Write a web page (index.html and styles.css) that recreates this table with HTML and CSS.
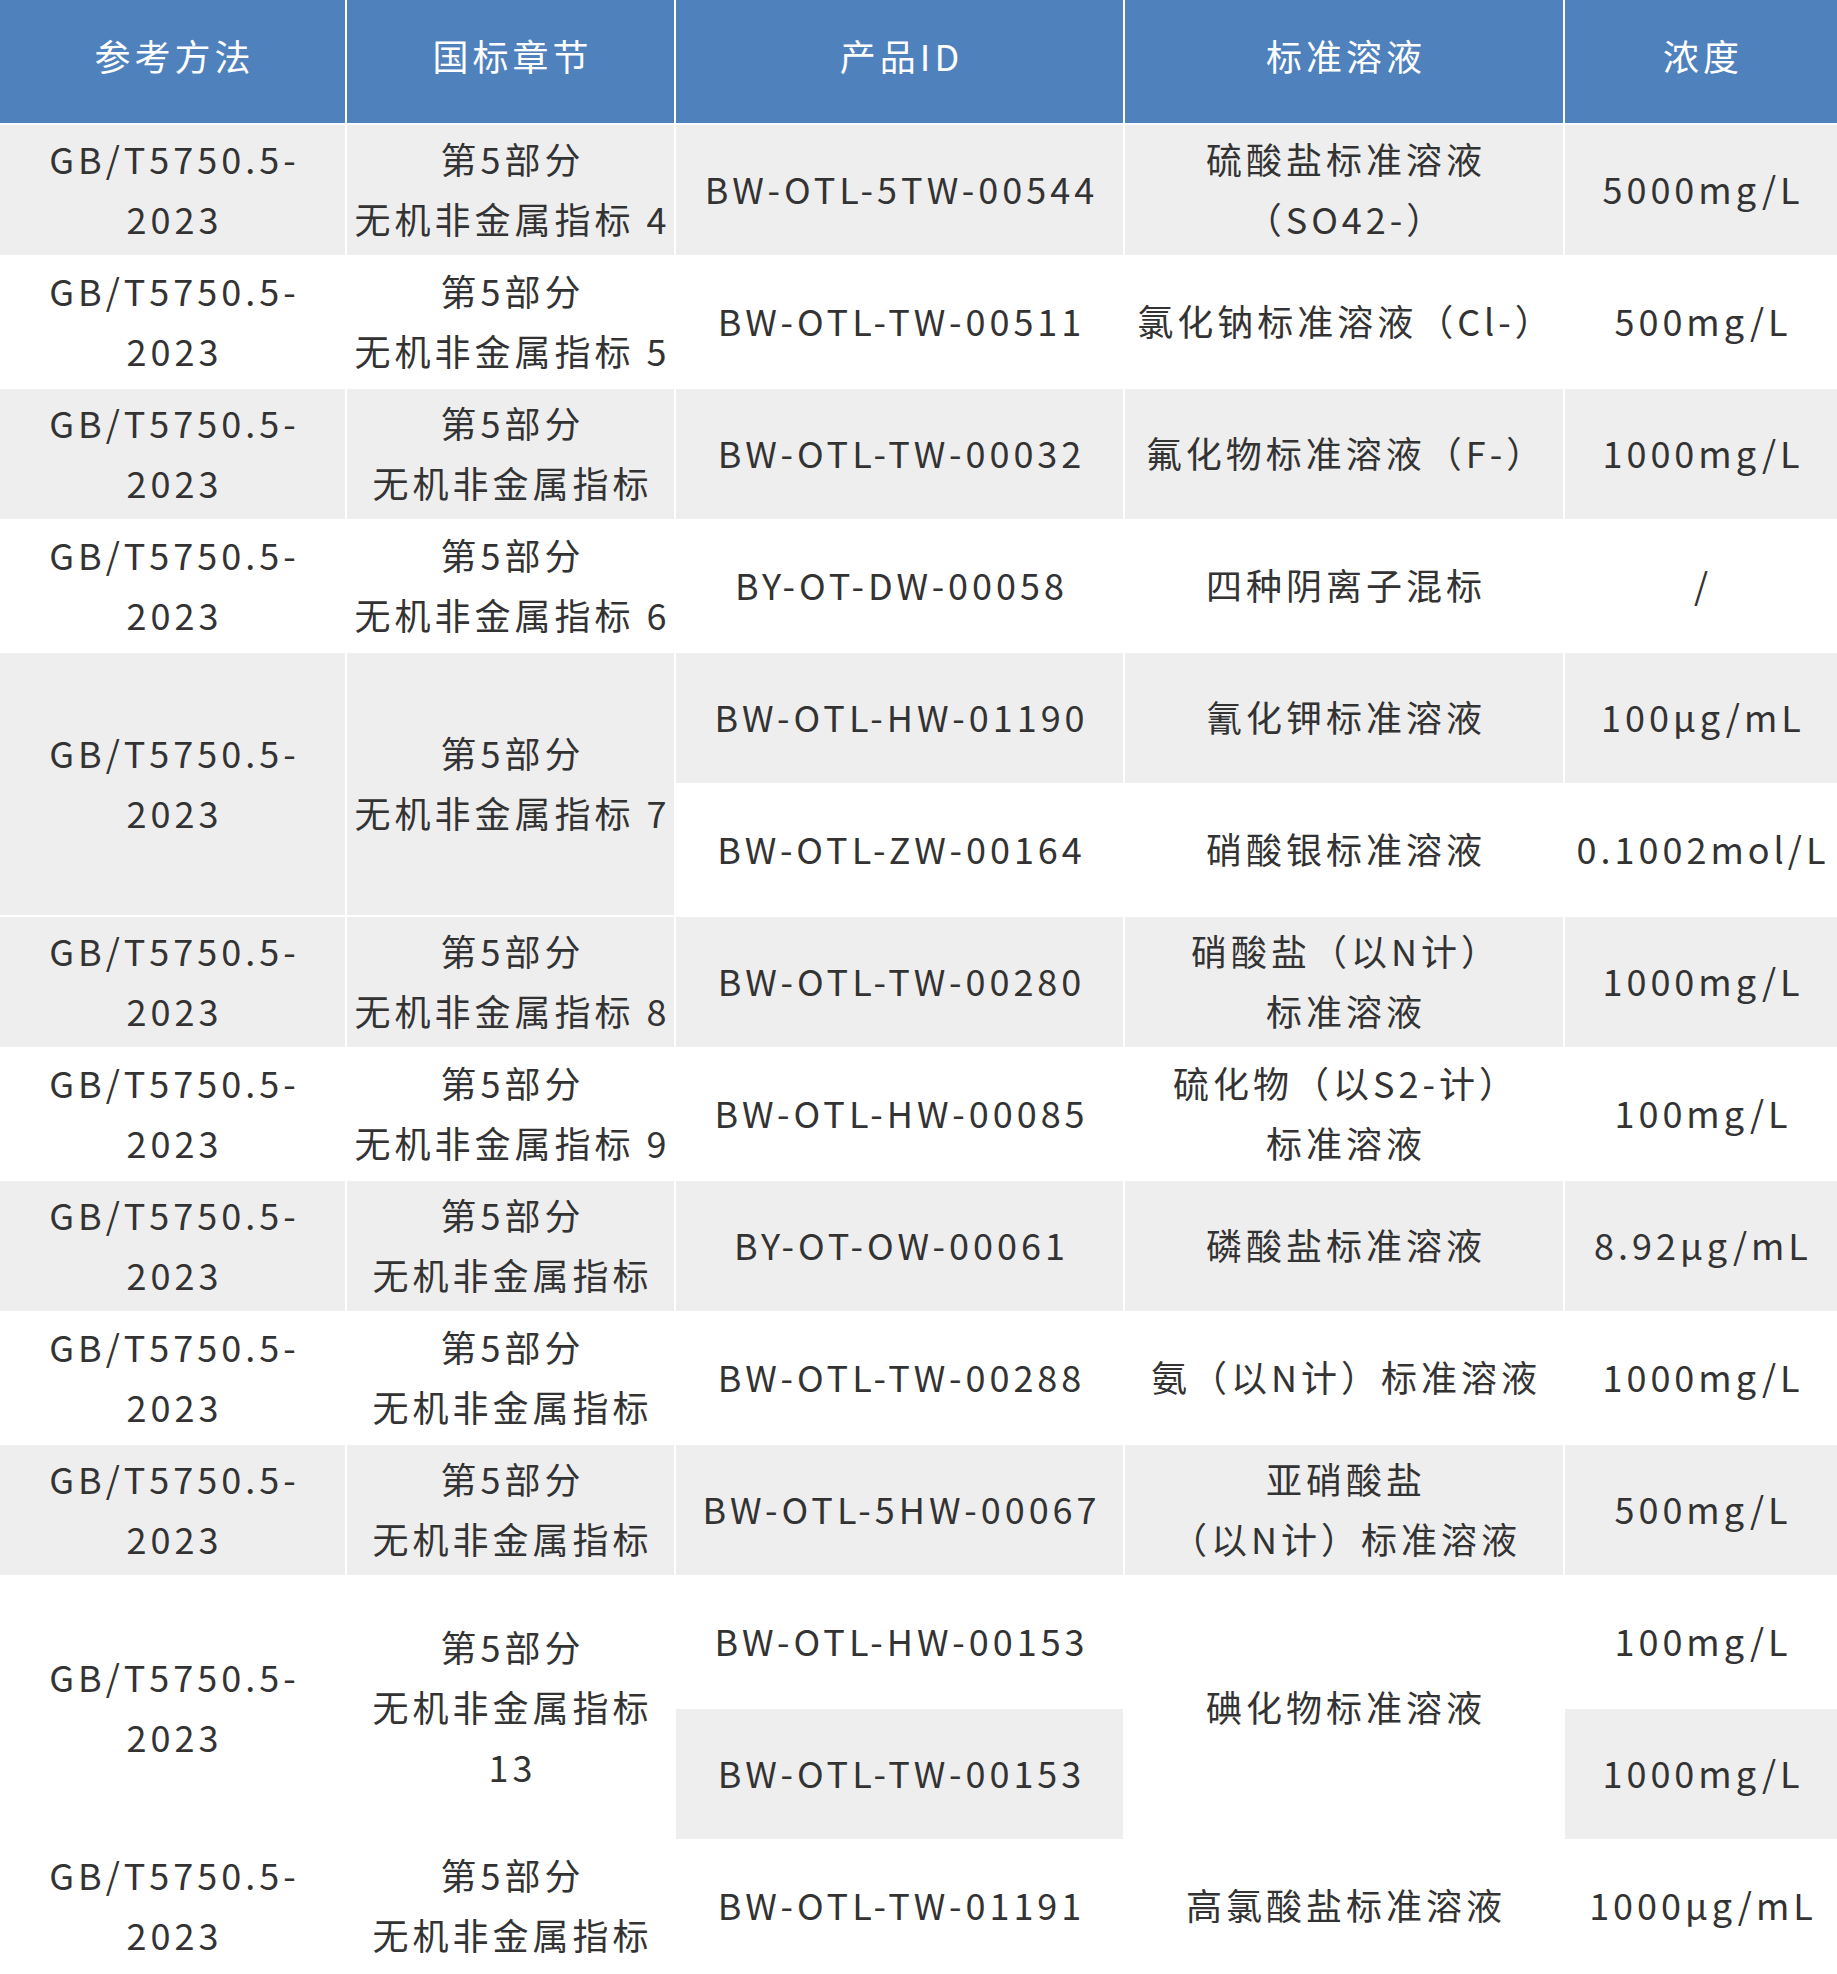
FILE: index.html
```html
<!DOCTYPE html>
<html lang="zh-CN">
<head>
<meta charset="utf-8">
<title>标准溶液对照表</title>
<link rel="stylesheet" href="styles.css">
</head>
<body>
<table class="std-table">
  <colgroup>
    <col class="col-method">
    <col class="col-chapter">
    <col class="col-id">
    <col class="col-solution">
    <col class="col-conc">
  </colgroup>
  <thead>
    <tr>
      <th>参考方法</th>
      <th>国标章节</th>
      <th>产品ID</th>
      <th>标准溶液</th>
      <th>浓度</th>
    </tr>
  </thead>
  <tbody>
    <tr>
      <td>GB/T5750.5-<br>2023</td>
      <td>第5部分<br>无机非金属指标 4</td>
      <td>BW-OTL-5TW-00544</td>
      <td>硫酸盐标准溶液<br>（SO42-）</td>
      <td>5000mg/L</td>
    </tr>
    <tr>
      <td>GB/T5750.5-<br>2023</td>
      <td>第5部分<br>无机非金属指标 5</td>
      <td>BW-OTL-TW-00511</td>
      <td>氯化钠标准溶液（Cl-）</td>
      <td>500mg/L</td>
    </tr>
    <tr>
      <td>GB/T5750.5-<br>2023</td>
      <td>第5部分<br>无机非金属指标</td>
      <td>BW-OTL-TW-00032</td>
      <td>氟化物标准溶液（F-）</td>
      <td>1000mg/L</td>
    </tr>
    <tr>
      <td>GB/T5750.5-<br>2023</td>
      <td>第5部分<br>无机非金属指标 6</td>
      <td>BY-OT-DW-00058</td>
      <td>四种阴离子混标</td>
      <td>/</td>
    </tr>
    <tr>
      <td rowspan="2">GB/T5750.5-<br>2023</td>
      <td rowspan="2">第5部分<br>无机非金属指标 7</td>
      <td>BW-OTL-HW-01190</td>
      <td>氰化钾标准溶液</td>
      <td>100µg/mL</td>
    </tr>
    <tr>
      <td>BW-OTL-ZW-00164</td>
      <td>硝酸银标准溶液</td>
      <td>0.1002mol/L</td>
    </tr>
    <tr>
      <td>GB/T5750.5-<br>2023</td>
      <td>第5部分<br>无机非金属指标 8</td>
      <td>BW-OTL-TW-00280</td>
      <td>硝酸盐（以N计）<br>标准溶液</td>
      <td>1000mg/L</td>
    </tr>
    <tr>
      <td>GB/T5750.5-<br>2023</td>
      <td>第5部分<br>无机非金属指标 9</td>
      <td>BW-OTL-HW-00085</td>
      <td>硫化物（以S2-计）<br>标准溶液</td>
      <td>100mg/L</td>
    </tr>
    <tr>
      <td>GB/T5750.5-<br>2023</td>
      <td>第5部分<br>无机非金属指标</td>
      <td>BY-OT-OW-00061</td>
      <td>磷酸盐标准溶液</td>
      <td>8.92µg/mL</td>
    </tr>
    <tr>
      <td>GB/T5750.5-<br>2023</td>
      <td>第5部分<br>无机非金属指标</td>
      <td>BW-OTL-TW-00288</td>
      <td>氨（以N计）标准溶液</td>
      <td>1000mg/L</td>
    </tr>
    <tr>
      <td>GB/T5750.5-<br>2023</td>
      <td>第5部分<br>无机非金属指标</td>
      <td>BW-OTL-5HW-00067</td>
      <td>亚硝酸盐<br>（以N计）标准溶液</td>
      <td>500mg/L</td>
    </tr>
    <tr>
      <td rowspan="2">GB/T5750.5-<br>2023</td>
      <td rowspan="2">第5部分<br>无机非金属指标<br>13</td>
      <td>BW-OTL-HW-00153</td>
      <td rowspan="2">碘化物标准溶液</td>
      <td>100mg/L</td>
    </tr>
    <tr>
      <td>BW-OTL-TW-00153</td>
      <td>1000mg/L</td>
    </tr>
    <tr>
      <td>GB/T5750.5-<br>2023</td>
      <td>第5部分<br>无机非金属指标</td>
      <td>BW-OTL-TW-01191</td>
      <td>高氯酸盐标准溶液</td>
      <td>1000µg/mL</td>
    </tr>
  </tbody>
</table>
</body>
</html>
```

FILE: styles.css
```css
html, body {
  margin: 0;
  padding: 0;
  background: #ffffff;
}

.std-table {
  width: 1837px;
  table-layout: fixed;
  border-collapse: separate;
  border-spacing: 0;
  font-family: "Noto Sans CJK SC", "Noto Sans", sans-serif;
  font-size: 36px;
  letter-spacing: 4px;
  line-height: 60px;
  color: #333333;
}

.col-method { width: 347px; }
.col-chapter { width: 329px; }
.col-id { width: 449px; }
.col-solution { width: 440px; }
.col-conc { width: 272px; }

.std-table th,
.std-table td {
  box-sizing: border-box;
  padding: 0 0 5px 4px;
  text-align: center;
  vertical-align: middle;
  white-space: nowrap;
  border-right: 2px solid #ffffff;
  border-bottom: 2px solid #ffffff;
  font-weight: normal;
}

.std-table th:last-child,
.std-table td:last-child {
  border-right: none;
}

.std-table th {
  height: 125px;
  background: #4f81bd;
  color: #ffffff;
  padding-bottom: 13px;
}

.std-table tbody td {
  height: 132px;
}

.std-table tbody tr:nth-child(odd) td {
  background: #eeeeee;
}

.std-table tbody tr:nth-child(even) td {
  background: #ffffff;
}
```
